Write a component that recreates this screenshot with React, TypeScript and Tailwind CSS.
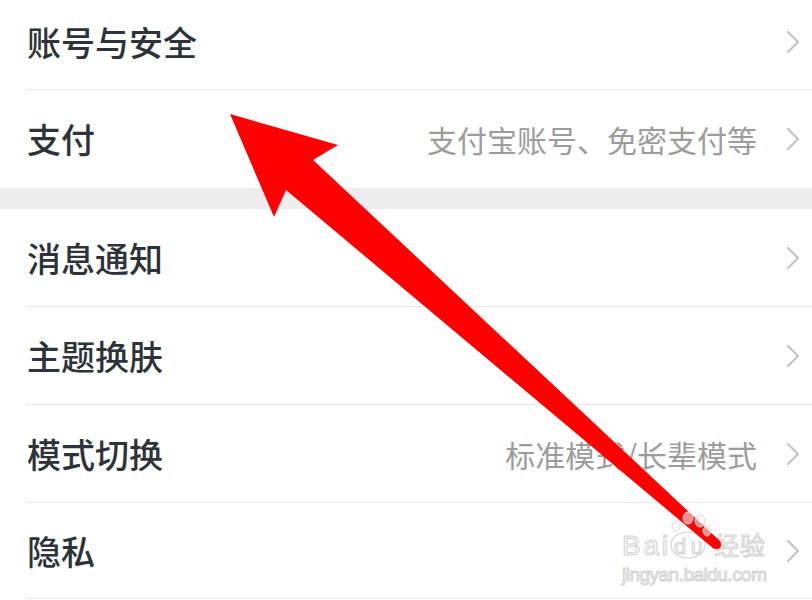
import React from "react";

const FONT = { fontFamily: '"Noto Sans CJK SC", "Noto Sans", sans-serif' };

function Chevron() {
  return (
    <svg width="16" height="26" viewBox="0 0 16 26" className="shrink-0">
      <path d="M3 3 L13 13 L3 23" fill="none" stroke="#c4c4c4" strokeWidth="2.2" strokeLinecap="round" strokeLinejoin="round" />
    </svg>
  );
}

function Row({ title, sub, h, border = true }: { title: string; sub?: string; h: string; border?: boolean }) {
  return (
    <div className="pl-[26px] bg-white">
      <div className={`flex items-center pr-[11px] ${h} ${border ? "border-b border-[#e8e8e8]" : ""}`}>
        <span className="flex-1 text-[34px] font-medium leading-none text-[#2d3338] pl-[1px]">{title}</span>
        {sub && <span className="text-[30px] leading-none text-[#9c9c9c] mr-[28px]">{sub}</span>}
        <Chevron />
      </div>
    </div>
  );
}

export default function App() {
  return (
    <div className="relative w-[812px] h-[600px] overflow-hidden bg-white" style={FONT}>
      <div className="flex flex-col">
        <div className="pl-[26px] bg-white">
          <div className="flex items-center pr-[11px] h-[90px] pb-[6px] border-b border-[#e8e8e8]">
            <span className="flex-1 text-[34px] font-medium leading-none text-[#2d3338] pl-[1px]">账号与安全</span>
            <Chevron />
          </div>
        </div>
        <Row title="支付" sub="支付宝账号、免密支付等" h="h-[98px]" border={false} />
        <div className="h-[21px] bg-[#ededed]" />
        <Row title="消息通知" h="h-[98px]" />
        <Row title="主题换肤" h="h-[98px]" />
        <Row title="模式切换" sub="标准模式/长辈模式" h="h-[98px]" />
        <Row title="隐私" h="h-[96px]" />
      </div>

      <svg className="absolute left-0 top-0 pointer-events-none" width="812" height="600" viewBox="0 0 812 600">
        <g stroke="#d4d4d4" strokeWidth="1.1" fill="#ffffff" fillOpacity="0.6">
          <text x="622" y="555" fontSize="28" fontFamily="Liberation Sans, sans-serif" textLength="46">Bai</text>
          <ellipse cx="688" cy="545" rx="17" ry="13" />
          <text x="674" y="554" fontSize="22" fontFamily="Liberation Sans, sans-serif" textLength="29">du</text>
          <text x="714" y="555" fontSize="25" fontFamily='"Noto Sans CJK SC", sans-serif' textLength="51">经验</text>
          <text x="622" y="581" fontSize="19" fontFamily="Liberation Sans, sans-serif" textLength="145">jingyan.baidu.com</text>
        </g>
        <polygon
          points="230,114 338,145 313,160 721,542 714,549 286,190 274,217"
          fill="#fe0000"
        />
        <circle cx="717" cy="545" r="4" fill="#fe0000" />
        <g fill="#ffffff" fillOpacity="0.55" stroke="#d8d8d8" strokeWidth="1">
          <ellipse cx="688" cy="518" rx="5" ry="6" />
          <ellipse cx="700" cy="521" rx="5" ry="6" />
          <ellipse cx="707" cy="531" rx="4" ry="5" />
          <ellipse cx="676" cy="526" rx="4" ry="5" />
        </g>
      </svg>
    </div>
  );
}
